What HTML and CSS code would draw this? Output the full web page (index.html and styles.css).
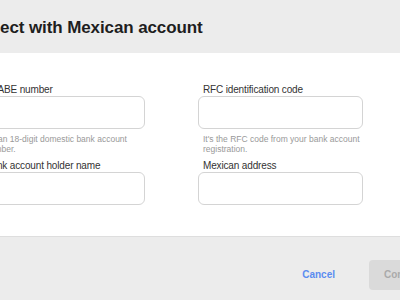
FILE: index.html
```html
<!DOCTYPE html>
<html lang="en">
<head>
    <meta charset="UTF-8">
    <meta name="viewport" content="width=device-width, initial-scale=1.0">
    <title>Connect with Mexican account</title>
    <link rel="stylesheet" href="styles.css">
</head>
<body>
    <div class="dialog">
        <div class="dialog-header">
            <h1>Connect with Mexican account</h1>
        </div>

        <div class="dialog-body">
            <div class="field">
                <label for="clabe">CLABE number</label>
                <input type="text" id="clabe">
                <p class="hint">It's an 18-digit domestic bank account number.</p>
            </div>
            <div class="field">
                <label for="rfc">RFC identification code</label>
                <input type="text" id="rfc">
                <p class="hint">It's the RFC code from your bank account registration.</p>
            </div>
            <div class="field">
                <label for="holder">Bank account holder name</label>
                <input type="text" id="holder">
            </div>
            <div class="field">
                <label for="address">Mexican address</label>
                <input type="text" id="address">
            </div>
        </div>

        <div class="dialog-footer">
            <button class="btn-cancel">Cancel</button>
            <button class="btn-confirm" disabled>Connect</button>
        </div>
    </div>
</body>
</html>
```

FILE: styles.css
```css
body {
    margin: 0;
    overflow: hidden;
    background-color: #fff;
    font-family: "Liberation Sans", Arial, sans-serif;
    color: #333;
}

.dialog {
    width: 540px;
    margin-left: -67px;
}

/* Header */
.dialog-header {
    height: 53px;
    padding: 2px 24px 0;
    box-sizing: border-box;
    background-color: #ececec;
    display: flex;
    align-items: center;
}

.dialog-header h1 {
    margin: 0;
    font-size: 17px;
    font-weight: bold;
    color: #1e1e1e;
    letter-spacing: -0.1px;
}

/* Form fields */
.dialog-body {
    padding: 30px 47px 31px;
    display: grid;
    grid-template-columns: 165px 165px;
    column-gap: 53px;
    row-gap: 5px;
    align-items: start;
}

.field label {
    display: block;
    padding-left: 5px;
    font-size: 10px;
    line-height: 13px;
    letter-spacing: -0.15px;
    color: #333;
}

.field input {
    display: block;
    box-sizing: border-box;
    width: 100%;
    height: 33px;
    border: 1px solid #d4d4d4;
    border-radius: 6px;
    background-color: #fff;
}

.hint {
    margin: 5px 0 0;
    padding-left: 5px;
    font-size: 8.5px;
    line-height: 10px;
    color: #999;
}

/* Footer */
.dialog-footer {
    height: 75px;
    border-top: 1px solid #dedede;
    background-color: #ececec;
    display: flex;
    align-items: center;
    justify-content: flex-end;
    padding: 0 24px;
}

.btn-cancel {
    border: none;
    background: none;
    padding: 0 16px;
    margin-right: 18px;
    font-family: inherit;
    font-size: 10px;
    font-weight: bold;
    color: #5b8cf0;
}

.btn-confirm {
    width: 80px;
    height: 30px;
    padding: 0 0 0 15px;
    border: none;
    border-radius: 4px;
    background-color: #dadada;
    font-family: inherit;
    font-size: 10px;
    font-weight: bold;
    color: #aaa;
    text-align: left;
}
```
